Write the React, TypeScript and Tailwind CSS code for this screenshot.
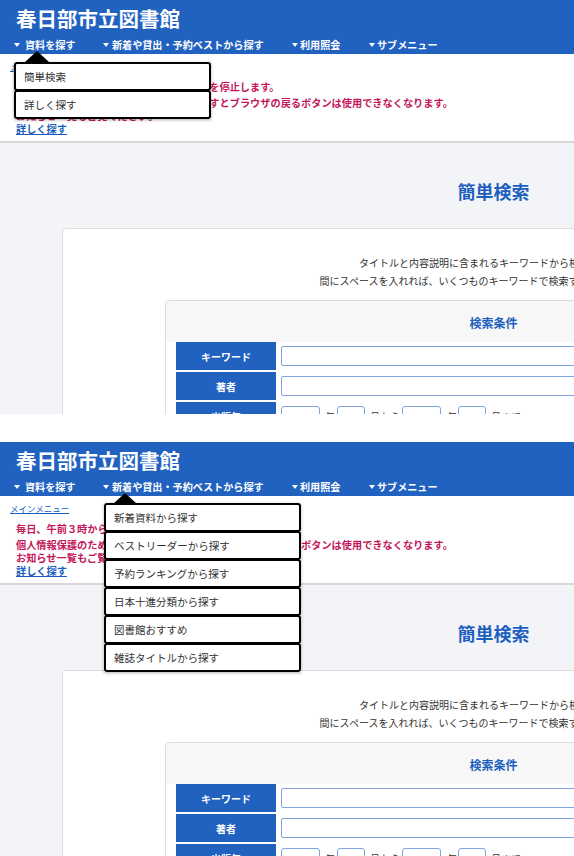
import React from 'react';

const NAV = [
  { label: '資料を探す', w: 'w-[89px]', gap: 'mr-[5px]' },
  { label: '新着や貸出・予約ベストから探す', w: 'w-[189px]', gap: 'mr-[3px]' },
  { label: '利用照会', w: 'w-[77px]', gap: 'mr-[2px]' },
  { label: 'サブメニュー', w: 'w-[90px]', gap: 'mr-[2px]' },
];

type MenuKey = 'search' | 'new';

const MENUS: Record<MenuKey, { box: string; caret: string; items: string[] }> = {
  search: {
    box: 'left-[14px] top-[62px] w-[197px]',
    caret: 'left-[25px] top-[51px]',
    items: ['簡単検索', '詳しく探す'],
  },
  new: {
    box: 'left-[104px] top-[61px] w-[197px]',
    caret: 'left-[113px] top-[51px]',
    items: [
      '新着資料から探す',
      'ベストリーダーから探す',
      '予約ランキングから探す',
      '日本十進分類から探す',
      '図書館おすすめ',
      '雑誌タイトルから探す',
    ],
  },
};

function Select({ w }: { w: string }) {
  return (
    <div className={`${w} flex h-[20px] items-center justify-end rounded-[3px] border border-[#7fa3dc] bg-white pr-[4px]`}>
      <svg width="6" height="4" viewBox="0 0 6 4">
        <path d="M0.5 0.5 L3 3 L5.5 0.5" fill="none" stroke="#555" strokeWidth="1" />
      </svg>
    </div>
  );
}

function Label({ children }: { children: React.ReactNode }) {
  return (
    <div className="flex h-full w-[100px] shrink-0 items-center justify-center bg-[#2162c1] text-[10px] font-bold text-white">
      {children}
    </div>
  );
}

function Screen({ menu }: { menu: MenuKey }) {
  const m = MENUS[menu];
  return (
    <div className="relative h-[414px] overflow-hidden bg-white">
      <header className="h-[54px] bg-[#2162c1] pl-4 pt-[6px] text-white">
        <h1 className="text-[20.5px] font-bold leading-[24px]">春日部市立図書館</h1>
        <nav className="-ml-[2px] mt-[8px] flex text-[10.1px] font-bold leading-[14px]">
          {NAV.map((n) => (
            <span key={n.label} className={`${n.w} flex shrink-0 items-center`}>
              <i className={`${n.gap} inline-block border-x-[3px] border-t-[4px] border-x-transparent border-t-white`} />
              {n.label}
            </span>
          ))}
        </nav>
      </header>

      <div className="pl-[10px] pt-[6px]">
        <a className="block text-[8.5px] leading-[12px] text-[#1a5fbf] underline">メインメニュー</a>
      </div>
      <div className="pl-4 pt-[7px] text-[10.2px] font-bold text-[#c4175b]">
        <p className="mb-[2px] leading-[15px]">毎日、午前３時から午前５時までシステムを停止します。</p>
        <p className="leading-[13px]">個人情報保護のため、マイページに入りますとブラウザの戻るボタンは使用できなくなります。</p>
        <p className="leading-[13px]">お知らせ一覧もご覧ください。</p>
        <a className="block leading-[13px] text-[#1a5fbf] underline">詳しく探す</a>
      </div>

      <div className="mt-[6px] w-[987px] border-t-2 border-[#d8d8d8] bg-[#f3f4f7]">
        <h2 className="pb-[25px] pt-[36px] text-center text-[18px] font-bold leading-[24px] text-[#1d5fbf]">簡単検索</h2>
        <div className="mx-[62px] h-[400px] rounded-t-[4px] border border-[#dcdcdc] bg-white pt-[25px]">
          <div className="text-center text-[10px] leading-[18px] text-[#333]">
            <p>タイトルと内容説明に含まれるキーワードから検索します。</p>
            <p>間にスペースを入れれば、いくつものキーワードで検索することができます。</p>
          </div>
          <div className="mx-auto mt-[10px] w-[657px] overflow-hidden rounded-[4px] border border-[#dcdcdc] bg-white">
            <div className="bg-[#f7f7f7] pb-[11px] pt-[14px] text-center text-[12px] font-bold leading-[16px] text-[#1d5fbf]">
              検索条件
            </div>
            <div className="flex flex-col gap-[2px] px-[10px] pb-[10px]">
              <div className="flex h-[28px] items-center">
                <Label>キーワード</Label>
                <div className="ml-[5px] h-[20px] flex-1 rounded-[2px] border border-[#7fa3dc] bg-white" />
              </div>
              <div className="flex h-[28px] items-center">
                <Label>著者</Label>
                <div className="ml-[5px] h-[20px] flex-1 rounded-[2px] border border-[#7fa3dc] bg-white" />
              </div>
              <div className="flex h-[28px] items-center text-[10px] text-[#333]">
                <Label>出版年</Label>
                <div className="ml-[5px] flex items-center">
                  <Select w="w-[39px]" />
                  <span className="ml-[5px] mr-[2px]">年</span>
                  <Select w="w-[28px]" />
                  <span className="ml-[5px] mr-[2px]">月から</span>
                  <Select w="w-[39px]" />
                  <span className="ml-[6px] mr-[1px]">年</span>
                  <Select w="w-[28px]" />
                  <span className="ml-[5px]">月まで</span>
                </div>
              </div>
            </div>
          </div>
        </div>
      </div>

      <div className={`absolute ${m.caret} h-0 w-0 border-x-[12px] border-b-[11px] border-x-transparent border-b-black`} />
      <div className={`absolute ${m.box} shadow-[0_1px_3px_rgba(0,0,0,0.3)]`}>
        {m.items.map((it, i) => (
          <div
            key={it}
            className={`${i > 0 ? '-mt-px' : ''} flex h-[29px] items-center rounded-[3px] border-2 border-black bg-white pl-[8px] text-[10.5px] text-[#333]`}
          >
            {it}
          </div>
        ))}
      </div>
    </div>
  );
}

export default function App() {
  return (
    <div className="w-[574px] overflow-hidden bg-white font-['Noto_Sans_CJK_JP',sans-serif]">
      <Screen menu="search" />
      <div className="h-[28px]" />
      <Screen menu="new" />
    </div>
  );
}
